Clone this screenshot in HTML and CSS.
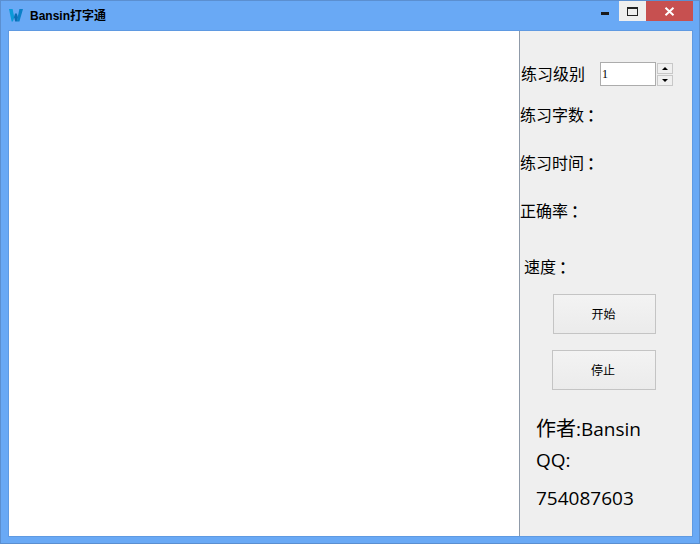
FILE: index.html
```html
<!DOCTYPE html>
<html lang="zh">
<head>
<meta charset="utf-8">
<title>Bansin打字通</title>
<link rel="stylesheet" href="styles.css">
</head>
<body>
<div class="window">
  <header class="titlebar">
    <svg class="logo" width="14" height="14" viewBox="0 0 14 14">
      <path d="M0 1h3.6l1.6 8-1.4 4.4H2.6z" fill="#0b9ad8"/>
      <path d="M3.8 13.4L6 5.4h1.8l1.2 4.2-1.2 3.8H6.2L5.2 9.6z" fill="#0a6db4"/>
      <path d="M7.8 13.4L10.4 1H14l-3.6 12.4z" fill="#0a80c8"/>
    </svg>
    <span class="title">Bansin打字通</span>
    <div class="controls">
      <div class="ctl ctl-min"><span class="min-bar"></span></div>
      <div class="ctl ctl-max"><span class="max-box"></span></div>
      <div class="ctl ctl-close">
        <svg width="11" height="9" viewBox="0 0 11 9"><path d="M1.5 .8l8 7.4M9.5 .8l-8 7.4" stroke="#fff" stroke-width="2" fill="none"/></svg>
      </div>
    </div>
  </header>
  <main class="client">
    <div class="textarea"></div>
    <aside class="panel">
      <div class="row row-level">
        <span class="label label-level">练习级别</span>
        <div class="spin-input">1</div>
        <div class="spin-btns">
          <div class="spin-btn"><span class="arrow-up"></span></div>
          <div class="spin-btn"><span class="arrow-down"></span></div>
        </div>
      </div>
      <div class="label stat stat-count">练习字数<span class="colon">：</span></div>
      <div class="label stat stat-time">练习时间<span class="colon">：</span></div>
      <div class="label stat stat-acc">正确率<span class="colon">：</span></div>
      <div class="label stat stat-speed">速度<span class="colon">：</span></div>
      <button class="btn btn-start">开始</button>
      <button class="btn btn-stop">停止</button>
      <div class="author author-name"><span class="cjk">作者</span>:Bansin</div>
      <div class="author author-qq">QQ:</div>
      <div class="author author-num">754087603</div>
    </aside>
  </main>
</div>
</body>
</html>
```
FILE: styles.css
```css
* { box-sizing: border-box; }
html, body { margin: 0; padding: 0; }
body { width: 700px; height: 544px; overflow: hidden; font-family: "Noto Sans CJK SC", "Liberation Sans", sans-serif; color: #000; }
.window {
  width: 700px; height: 544px;
  background: #69a9f5;
  border: 1px solid #5b8fd0;
  padding: 0 6px 6px 7px;
  display: flex; flex-direction: column;
}
.titlebar { height: 29px; flex: none; display: flex; align-items: flex-start; }
.logo { margin: 7px 0 0 1px; }
.title { font-size: 12px; font-weight: 700; line-height: 16px; margin: 7px 0 0 7px; font-family: "Liberation Sans", "Noto Sans CJK SC", sans-serif; }
.controls { margin-left: auto; display: flex; }
.ctl { height: 20px; display: flex; align-items: center; justify-content: center; }
.ctl-min { width: 27px; padding-top: 5px; padding-right: 2px; }
.min-bar { display: block; width: 8px; height: 3px; background: #1a1a1a; }
.ctl-max { width: 27px; background: #efefef; }
.max-box { display: block; width: 11px; height: 9px; border: 1px solid #222; border-top-width: 2px; }
.ctl-close { width: 47px; background: #c75050; }
.client {
  flex: 1; display: flex;
  border: 1px solid #5f9ae2;
}
.textarea { width: 511px; flex: none; background: #fff; border-right: 1px solid #8f9aa8; }
.panel { flex: 1; background: #efefef; display: flex; flex-direction: column; align-items: flex-start; }
.label { font-size: 16px; line-height: 24px; height: 24px; white-space: nowrap; }
.label-level { margin-top: -2px; }
.colon { display: inline-block; margin-left: 3px; font-weight: 500; }
.row-level { display: flex; align-items: center; height: 24px; margin-top: 31px; margin-left: 1px; }
.spin-input {
  width: 56px; height: 24px; margin-left: 15px;
  background: #fff; border: 1px solid #acacac;
  font-family: "Liberation Serif", serif; font-size: 12px; line-height: 22px; padding-left: 1px;
}
.spin-btns { display: flex; flex-direction: column; gap: 1px; margin-left: 1px; }
.spin-btn { width: 16px; height: 11px; border: 1px solid #c8c8c8; background: #f0f0f0; display: flex; align-items: center; justify-content: center; }
.arrow-up { width: 0; height: 0; border: 3px solid transparent; border-top: 0; border-bottom: 3px solid #000; }
.arrow-down { width: 0; height: 0; border: 3px solid transparent; border-bottom: 0; border-top: 3px solid #000; }
.stat-count { margin-top: 16px; }
.stat-time { margin-top: 24px; }
.stat-acc { margin-top: 24px; }
.stat-speed { margin-top: 32px; margin-left: 4px; }
.btn {
  height: 40px; border: 1px solid #c4c4c4;
  background: linear-gradient(#f3f3f3, #ebebeb);
  font-family: "Noto Sans CJK SC", sans-serif; font-size: 12px; color: #000; padding: 0 2px 2px 0;
}
.btn-start { width: 103px; margin: 16px 0 0 33px; }
.btn-stop { width: 104px; margin: 16px 0 0 32px; }
.author { font-size: 19px; line-height: 28px; height: 28px; margin-left: 16px; white-space: nowrap; font-family: "Open Sans", "Noto Sans CJK SC", sans-serif; }
.cjk { font-size: 20px; font-family: "Noto Sans CJK SC", sans-serif; }
.author-name { margin-top: 24px; }
.author-qq { margin-top: 4px; }
.author-num { margin-top: 10px; }
```
